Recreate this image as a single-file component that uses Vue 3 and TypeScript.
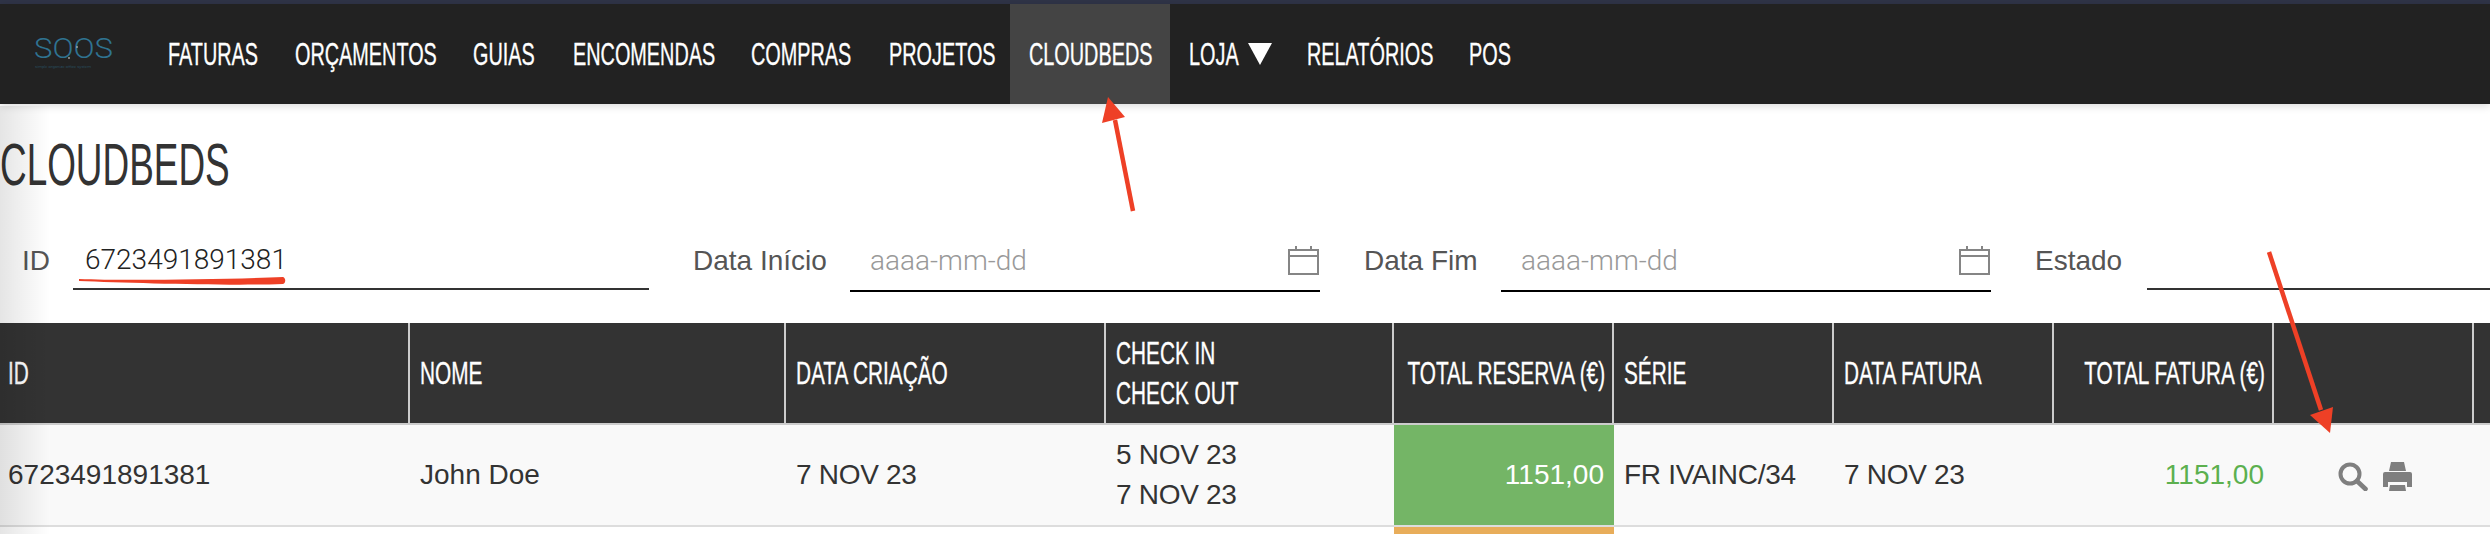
<script setup lang="ts">
const navItems = [
  { label: 'FATURAS', width: 127 },
  { label: 'ORÇAMENTOS', width: 178 },
  { label: 'GUIAS', width: 100 },
  { label: 'ENCOMENDAS', width: 178 },
  { label: 'COMPRAS', width: 138 },
  { label: 'PROJETOS', width: 140 },
  { label: 'CLOUDBEDS', width: 160, active: true },
  { label: 'LOJA', width: 118, caret: true },
  { label: 'RELATÓRIOS', width: 162 },
  { label: 'POS', width: 80 },
]

const columns = [410, 376, 320, 288, 220, 220, 220, 220, 200, 16]
</script>

<template>
  <div class="page">
    <div class="strip" />
    <nav class="nav">
      <div class="logo">
        <svg width="149" height="100" viewBox="0 0 149 100">
          <text x="34" y="58" class="logo-word" textLength="79" lengthAdjust="spacingAndGlyphs">SOOS</text>
          <text x="35" y="68" class="logo-sub" textLength="56" lengthAdjust="spacingAndGlyphs">simple organize office system</text>
          <circle cx="77" cy="47" r="0.9" fill="#aaa" />
          <circle cx="69" cy="58" r="0.9" fill="#aaa" />
        </svg>
      </div>
      <a
        v-for="item in navItems"
        :key="item.label"
        class="nav-item"
        :class="{ active: item.active }"
        :style="{ width: item.width + 'px' }"
      >
        <span class="narrow">{{ item.label }}</span>
        <i v-if="item.caret" class="caret" />
      </a>
    </nav>

    <h1 class="title"><span class="narrow">CLOUDBEDS</span></h1>

    <div class="filters">
      <label class="flabel first">ID</label>
      <div class="field id-field"><span class="value">6723491891381</span></div>
      <label class="flabel">Data Início</label>
      <div class="field date-field">
        <span class="placeholder">aaaa-mm-dd</span>
        <svg class="cal" width="31" height="29" viewBox="0 0 31 29" fill="none" stroke="#858585" stroke-width="2">
          <rect x="1" y="4" width="29" height="24" />
          <path d="M1 10h29M8 0v4M23 0v4" />
        </svg>
      </div>
      <label class="flabel">Data Fim</label>
      <div class="field date-field">
        <span class="placeholder">aaaa-mm-dd</span>
        <svg class="cal" width="31" height="29" viewBox="0 0 31 29" fill="none" stroke="#858585" stroke-width="2">
          <rect x="1" y="4" width="29" height="24" />
          <path d="M1 10h29M8 0v4M23 0v4" />
        </svg>
      </div>
      <label class="flabel">Estado</label>
      <div class="field id-field" />
    </div>

    <table class="grid">
      <colgroup>
        <col v-for="(w, i) in columns" :key="i" :style="{ width: w + 'px' }" />
      </colgroup>
      <thead>
        <tr>
          <th class="first-head"><span class="narrow">ID</span></th>
          <th><span class="narrow">NOME</span></th>
          <th><span class="narrow">DATA CRIAÇÃO</span></th>
          <th class="two">
            <div><span class="narrow">CHECK IN</span></div>
            <div><span class="narrow">CHECK OUT</span></div>
          </th>
          <th><div class="end"><span class="narrow rt">TOTAL RESERVA (€)</span></div></th>
          <th><span class="narrow">SÉRIE</span></th>
          <th><span class="narrow">DATA FATURA</span></th>
          <th><div class="end"><span class="narrow rt">TOTAL FATURA (€)</span></div></th>
          <th />
          <th />
        </tr>
      </thead>
      <tbody>
        <tr class="row">
          <td class="first-cell">6723491891381</td>
          <td>John Doe</td>
          <td class="tight">7 NOV 23</td>
          <td class="two tight"><div>5 NOV 23</div><div>7 NOV 23</div></td>
          <td class="num paid">1151,00</td>
          <td class="tight">FR IVAINC/34</td>
          <td class="tight">7 NOV 23</td>
          <td class="num green">1151,00</td>
          <td class="actions">
            <svg width="30" height="29" viewBox="0 0 30 29" fill="none" stroke="#7f7f7f">
              <circle cx="12" cy="12" r="9.5" stroke-width="4" />
              <path d="M19 19l8.5 8" stroke-width="4.6" stroke-linecap="round" />
            </svg>
            <svg width="29" height="29" viewBox="0 0 29 29" fill="#7f7f7f">
              <path d="M8 0h13l2 9H6zM2 10h25a2 2 0 0 1 2 2v13h-5v-5H5v5H0V12a2 2 0 0 1 2-2z" />
              <path d="M7 23h15l1 6H6z" />
            </svg>
          </td>
          <td />
        </tr>
        <tr class="row next">
          <td colspan="4" />
          <td class="pending" />
          <td colspan="5" />
        </tr>
      </tbody>
    </table>

    <div class="edge" />
    <svg class="marks" width="2490" height="534" viewBox="0 0 2490 534">
      <path d="M79 279C130 281 230 279 283 277c3 1 3 6 0 7C230 286 130 283 79 281z" fill="#ee4026" />
      <path d="M1133 211L1115 120" stroke="#ee4026" stroke-width="4.5" fill="none" />
      <path d="M1108 97L1125 117L1102 123z" fill="#ee4026" />
      <path d="M2269 252L2321 410" stroke="#ee4026" stroke-width="4.5" fill="none" />
      <path d="M2330 433L2310 415L2333 407z" fill="#ee4026" />
    </svg>
  </div>
</template>

<style scoped>
.page {
  position: relative;
  width: 2490px;
  height: 534px;
  overflow: hidden;
  background: #fff;
  color: #333;
  font-family: "Liberation Sans", Arial, sans-serif;
}

.strip {
  height: 4px;
  background: #2f3447;
}

.nav {
  display: flex;
  height: 100px;
  background: #222;
  box-shadow: 0 2px 8px rgba(0, 0, 0, 0.15);
}

.logo {
  width: 149px;
  height: 100px;
  margin-top: -4px;
}

.logo-word {
  font-family: Roboto, sans-serif;
  font-weight: 300;
  font-size: 27px;
  fill: #2f7391;
}

.logo-sub {
  font-family: Roboto, sans-serif;
  font-weight: 300;
  font-size: 4px;
  fill: #2a5a70;
}

.narrow {
  display: inline-block;
  flex: none;
  white-space: nowrap;
  font-weight: 400;
  -webkit-text-stroke: 0.35px currentColor;
  transform: scaleX(0.65);
  transform-origin: left center;
}

.narrow.rt {
  transform-origin: right center;
}

.nav-item {
  display: flex;
  align-items: center;
  flex: none;
  padding-left: 19px;
  box-sizing: border-box;
  color: #fff;
  font-size: 32px;
}

.nav-item .narrow {
  transform: scaleX(0.62);
}

.nav-item.active {
  background: #444;
}

.caret {
  flex: none;
  margin-left: -21px;
  border-left: 12px solid transparent;
  border-right: 12px solid transparent;
  border-top: 22px solid #fff;
}

.title {
  margin: 36px 0 50px;
  height: 50px;
  line-height: 50px;
  font-size: 60px;
  font-weight: 400;
  color: #333;
}

.title .narrow {
  -webkit-text-stroke: 0;
  transform: scaleX(0.615);
}

.filters {
  display: grid;
  grid-template-columns: 73px 576px 201px 470px 181px 490px 156px 343px;
  height: 52px;
}

.flabel {
  align-self: center;
  padding: 0 0 10px 44px;
  font-size: 28px;
  color: #555;
  white-space: nowrap;
}

.flabel.first {
  padding-left: 22px;
}

.field {
  display: flex;
  align-items: center;
  justify-content: space-between;
  box-sizing: border-box;
  padding: 0 1px 10px 12px;
  font-family: Roboto, sans-serif;
  font-weight: 300;
  font-size: 28px;
}

.id-field {
  height: 50px;
  border-bottom: 2px solid #333;
}

.date-field {
  padding-left: 20px;
  border-bottom: 2px solid #000;
}

.value {
  color: #222;
}

.placeholder {
  color: #999;
}

.grid {
  width: 2490px;
  margin-top: 31px;
  table-layout: fixed;
  border-collapse: separate;
  border-spacing: 0;
}

.grid th {
  height: 102px;
  padding: 0 7px 0 10px;
  box-sizing: border-box;
  background: #333;
  color: #fff;
  font-size: 32px;
  font-weight: 400;
  text-align: left;
  line-height: 40px;
  border-right: 2px solid #ccc;
  border-bottom: 2px solid #ccc;
}

.grid th.first-head {
  padding-left: 8px;
}

.grid th:last-child {
  border-right: 0;
}

.end {
  display: flex;
  justify-content: flex-end;
}

.row td {
  height: 102px;
  padding: 0 10px;
  box-sizing: border-box;
  background: #f9f9f9;
  font-size: 28px;
  line-height: 40px;
  color: #333;
  border-bottom: 2px solid #ddd;
  white-space: nowrap;
}

.row td.first-cell {
  padding-left: 8px;
}

.row td.tight {
  letter-spacing: -0.3px;
}

.row td.num {
  text-align: right;
}

.row td.paid {
  background: #74b566;
  color: #fff;
}

.row td.green {
  color: #5cb04f;
}

.row td.actions {
  padding: 0 0 0 64px;
}

.actions svg {
  margin-right: 15px;
  vertical-align: middle;
}

.row.next td {
  height: 10px;
  background: #fff;
  border: 0;
}

.row.next td.pending {
  background: #e8ad5a;
}

.edge {
  position: absolute;
  left: 0;
  top: 106px;
  bottom: 0;
  width: 50px;
  background: linear-gradient(to right, rgba(0, 0, 0, 0.1), rgba(0, 0, 0, 0));
  pointer-events: none;
}

.marks {
  position: absolute;
  left: 0;
  top: 0;
  pointer-events: none;
}
</style>
